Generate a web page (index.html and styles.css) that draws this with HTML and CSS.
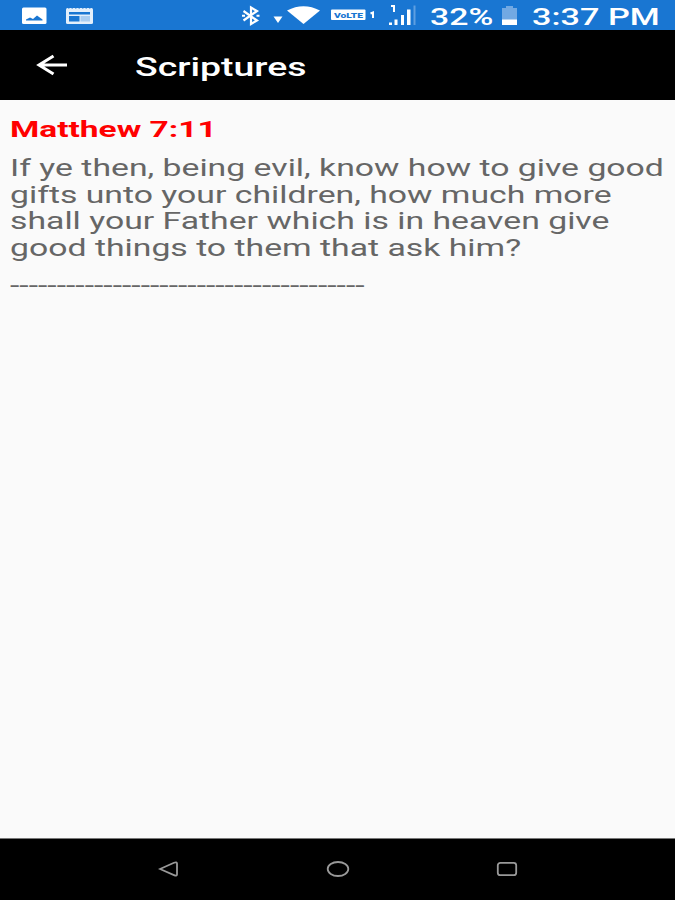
FILE: index.html
```
<!DOCTYPE html>
<html lang="en">
<head>
    <meta charset="utf-8">
    <title>Scriptures</title>
    <meta name="viewport" content="width=device-width, initial-scale=1">
    <link rel="stylesheet" href="styles.css">
</head>
<body>
    <div class="status-bar">
        <svg class="notifications" width="80" height="30" viewBox="0 0 80 30">
            <rect x="0" y="7.500" width="24.500" height="16.500" rx="1.500" fill="#fff"/>
            <path d="M4 20.500v-1l4-2 3 1.500 4-3.500 5.500 4v1z" fill="#1976d2"/>
            <rect x="44" y="8" width="27" height="16" rx="1.500" fill="#e3effb"/>
            <path d="M47 12h21v2.500H47zM47 16h10.500v5.500H47z" fill="#1976d2"/>
            <path d="M58.500 16H68v5.500h-9.500z" fill="#a9cdf1"/>
            <path d="M46 8h24" stroke="#1976d2" stroke-width="1" stroke-dasharray="1.500 2"/>
        </svg>
        <svg class="signals" width="180" height="30" viewBox="0 0 180 30">
            <path d="M2.500 11l13.500 9.500-6 3.500V7.500l6 3.500-13.500 9.500" fill="none" stroke="#fff" stroke-width="2.200"/>
            <path d="M1 15.800h3M15.500 15.800h3" stroke="#fff" stroke-width="2"/>
            <path d="M32.500 16.500h9l-4.500 6.500z" fill="#fff"/>
            <path d="M46 10.500Q62.500 2 79 10.500L62.500 24z" fill="#fff"/>
            <rect x="90" y="9.500" width="34.500" height="10.500" rx="1" fill="#fff"/>
            <text class="volte" x="93" y="17.800" textLength="29" lengthAdjust="spacingAndGlyphs">VoLTE</text>
            <path d="M129.500 13.500l2.500-1V18" fill="none" stroke="#fff" stroke-width="2"/>
            <path d="M150 6h3v6" fill="none" stroke="#fff" stroke-width="2"/>
            <path d="M148 22.500h3v2.500h-3zM153.500 19.500h3V25h-3zM160 15h3v10h-3zM166 9.500h3.500V25H166z" fill="#fff"/>
            <path d="M172.500 5.500h2V25h-2z" fill="#5e9fe1"/>
        </svg>
        <span class="percent"><span class="wide">32%</span></span>
        <svg class="battery" width="18" height="30" viewBox="0 0 18 30">
            <path d="M1 8h4V6h7v2h4v12H1z" fill="#72a9e3"/>
            <path d="M1 19.500h15V25H1z" fill="#fff"/>
        </svg>
        <span class="clock"><span class="wide">3:37 PM</span></span>
    </div>
    <header class="toolbar">
        <svg class="back" width="32" height="22" viewBox="0 0 32 22">
            <path d="M31 11H3M17.500 2L3 11l14.500 9" fill="none" stroke="#fff" stroke-width="3"/>
        </svg>
        <h1 class="wide">Scriptures</h1>
    </header>
    <main class="content">
        <h2 class="wide">Matthew 7:11</h2>
        <p class="verse wide">If ye then, being evil, know how to give good<br>gifts unto your children, how much more<br>shall your Father which is in heaven give<br>good things to them that ask him?</p>
        <p class="divider wide">--------------------------------------</p>
    </main>
    <nav class="nav-bar">
        <svg width="22" height="18" viewBox="0 0 22 18">
            <path d="M2 9L16 2.800Q19 1.500 19 3.500V14.500Q19 16.500 16 15.200z"/>
        </svg>
        <svg width="24" height="18" viewBox="0 0 24 18">
            <ellipse cx="12" cy="9" rx="10.300" ry="7"/>
        </svg>
        <svg width="22" height="18" viewBox="0 0 22 18">
            <rect x="1.800" y="2.800" width="18.400" height="12.400" rx="2.500"/>
        </svg>
    </nav>
</body>
</html>
```
FILE: styles.css
```
* {
    box-sizing: border-box;
}

body {
    display: flex;
    flex-direction: column;
    height: 900px;
    margin: 0;
    background: #fafafa;
    font-family: Roboto, sans-serif;
}

h1, h2, p {
    margin: 0;
}

/* the whole screen uses horizontally stretched type */
.wide {
    display: block;
    width: max-content;
    white-space: nowrap;
    transform: scaleX(1.468);
    transform-origin: left center;
}

.status-bar {
    display: flex;
    height: 30px;
    padding-left: 22px;
    background: #1976d2;
    color: #fff;
    font-size: 23px;
    font-weight: 500;
    line-height: 35px;
}

.signals {
    margin-left: 139px;
}

.volte {
    fill: #1976d2;
    font-size: 8px;
    font-weight: 900;
}

.percent {
    width: 71px;
    margin-left: 9px;
}

.clock {
    margin-left: 13px;
}

.clock .wide {
    transform: scaleX(1.49);
}

.toolbar {
    display: flex;
    align-items: center;
    height: 70px;
    padding-left: 36px;
    background: #000;
    color: #fff;
}

.toolbar h1 {
    margin-left: 67px;
    padding-top: 3px;
    font-size: 25.5px;
    font-weight: 500;
    line-height: 30px;
}

.content {
    flex: 1;
    padding: 16px 10px 0;
    color: #666;
}

.content h2 {
    color: #f00;
    font-size: 22.8px;
    font-weight: 700;
    line-height: 27px;
}

.verse {
    margin-top: 13px;
    font-size: 23px;
    line-height: 26.7px;
}

.divider {
    margin-top: 9px;
    font-size: 23px;
    line-height: 27px;
}

.nav-bar {
    display: flex;
    align-items: center;
    justify-content: space-between;
    height: 62px;
    padding: 0 157px 1px 158px;
    border-top: 1px solid #777;
    background: #000;
}

.nav-bar svg {
    fill: none;
    stroke: #999;
    stroke-width: 1.8;
}
```
